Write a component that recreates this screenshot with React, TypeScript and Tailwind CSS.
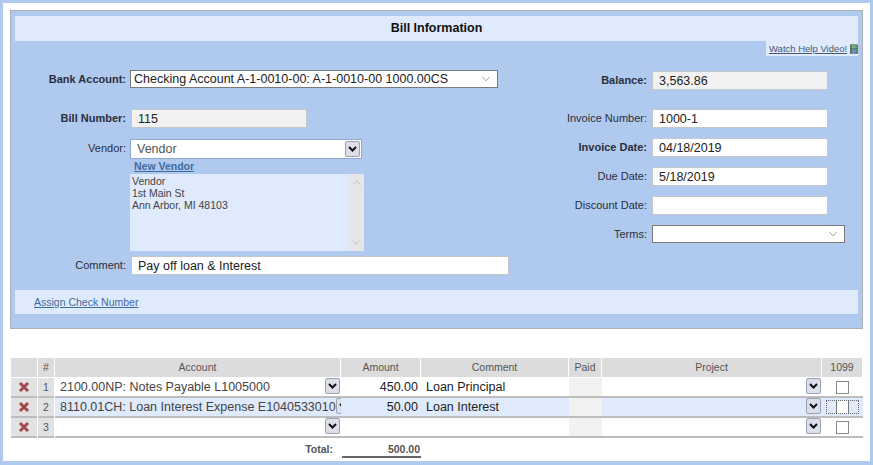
import { ChevronDown, ChevronUp } from "lucide-react";

const font = "font-['Liberation_Sans',Arial,sans-serif]";

const Label = ({ text, width, bold }: { text: string; width: string; bold?: boolean }) => (
  <div className={`${width} shrink-0 text-right text-[11px] leading-[18px] text-[#2b2f3a] ${bold ? "font-bold" : ""}`}>{text}</div>
);

const Field = ({ value, width, muted }: { value?: string; width: string; muted?: boolean }) => (
  <div className={`${width} h-[19px] border border-[#c3c7cc] ${muted ? "bg-[#f2f2f2]" : "bg-white"} pl-[6px] text-[12.5px] leading-[18px] text-[#222]`}>{value}</div>
);

const NativeSelect = ({ value, width, height }: { value?: string; width: string; height: string }) => (
  <div className={`${width} ${height} flex items-center justify-between border border-[#7a7a7a] bg-white pl-[3px] pr-[4px] text-[12.5px] text-[#222]`}>
    <span className="whitespace-nowrap">{value}</span>
    <ChevronDown className="size-[14px] text-[#777]" strokeWidth={1.2} />
  </div>
);

const DropButton = () => (
  <div className="flex h-[16px] w-[15px] shrink-0 items-center justify-center rounded-[2px] border border-[#9aa3b5] bg-[#dcdfe9]">
    <svg width="9" height="6" viewBox="0 0 9 6">
      <path d="M1 1 L4.5 4.5 L8 1" fill="none" stroke="#111" strokeWidth="2" />
    </svg>
  </div>
);

const Check = () => <div className="size-[13px] border border-[#8a8a8a] bg-white" />;

const lines = [
  { n: "1", account: "2100.00NP: Notes Payable L1005000", amount: "450.00", comment: "Loan Principal" },
  { n: "2", account: "8110.01CH: Loan Interest Expense E1040533010", amount: "50.00", comment: "Loan Interest", active: true },
  { n: "3", account: "", amount: "", comment: "" },
];

const headers = ["", "#", "Account", "Amount", "Comment", "Paid", "Project", "1099"];

const FilmIcon = () => (
  <svg width="12" height="14" viewBox="0 0 12 14">
    <rect width="12" height="14" fill="#4a4f45" />
    <rect x="3" y="1" width="6" height="5.5" fill="#62b878" />
    <rect x="3" y="7.5" width="6" height="5.5" fill="#5a9ccf" />
    {[1, 4, 7, 10].map((y) => (
      <g key={y}>
        <rect x="0.8" y={y} width="1.4" height="1.6" fill="#d8d8c8" />
        <rect x="9.8" y={y} width="1.4" height="1.6" fill="#d8d8c8" />
      </g>
    ))}
  </svg>
);

export default function App() {
  return (
    <div className={`${font} h-[465px] w-[873px] overflow-hidden bg-[#b0c9ee] pt-[3px] pl-[3px]`}>
      <div className="h-[458px] w-[867px] bg-white pt-[7px] pl-[7px]">
        {/* Bill panel */}
        <div className="flex h-[319px] w-[853px] flex-col border border-[#a9b0ba] bg-[#b0c9ee] px-[4px] pt-[5px]">
          <div className="h-[25px] shrink-0 bg-[#dfeafd] text-center text-[12.5px] font-bold leading-[25px] text-[#111]">Bill Information</div>
          <div className="flex h-[15px] w-[92px] shrink-0 items-center gap-[3px] self-end bg-[#dfeafd] pl-[3px]">
            <span className="whitespace-nowrap text-[9.5px] leading-[13px] text-[#4a5a6a] underline">Watch Help Video!</span>
            <FilmIcon />
          </div>

          <div className="flex h-[220px] shrink-0">
            {/* Left column */}
            <div className="w-[500px]">
              <div className="mt-[14px] flex gap-[4px]">
                <Label text="Bank Account:" width="w-[111px]" bold />
                <NativeSelect value="Checking Account A-1-0010-00: A-1-0010-00 1000.00CS" width="w-[368px]" height="h-[18px]" />
              </div>
              <div className="mt-[21px] flex gap-[5px]">
                <Label text="Bill Number:" width="w-[111px]" bold />
                <Field value="115" width="w-[176px]" muted />
              </div>
              <div className="mt-[11px] flex gap-[4px]">
                <Label text="Vendor:" width="w-[111px]" />
                <div className="flex h-[20px] w-[232px] items-center justify-between border border-[#8fa9cf] bg-white pl-[6px] pr-[1px] text-[12.5px] text-[#555]">
                  Vendor
                  <DropButton />
                </div>
              </div>
              <div className="h-[15px] pl-[119px] text-[10.5px] font-bold leading-[15px] text-[#3f6c9e] underline">New Vendor</div>
              <div className="ml-[115px] flex h-[77px] w-[234px] justify-between bg-[#dfeafd]">
                <div className="px-[2px] pt-[1px] text-[10.5px] leading-[12px] text-[#444]">
                  <div>Vendor</div>
                  <div>1st Main St</div>
                  <div>Ann Arbor, MI 48103</div>
                </div>
                <div className="flex w-[15px] flex-col items-center justify-between bg-[#e6e6e6] py-[2px] text-[#a5a5a5]">
                  <ChevronUp className="size-[13px]" strokeWidth={1.2} />
                  <ChevronDown className="size-[13px]" strokeWidth={1.2} />
                </div>
              </div>
              <div className="mt-[5px] flex gap-[5px]">
                <Label text="Comment:" width="w-[111px]" />
                <Field value="Pay off loan & Interest" width="w-[378px]" />
              </div>
            </div>

            {/* Right column */}
            <div className="flex-1">
              <div className="mt-[15px] flex gap-[5px]">
                <Label text="Balance:" width="w-[132px]" bold />
                <Field value="3,563.86" width="w-[176px]" muted />
              </div>
              <div className="mt-[19px] flex gap-[5px]">
                <Label text="Invoice Number:" width="w-[132px]" />
                <Field value="1000-1" width="w-[176px]" />
              </div>
              <div className="mt-[10px] flex gap-[5px]">
                <Label text="Invoice Date:" width="w-[132px]" bold />
                <Field value="04/18/2019" width="w-[176px]" />
              </div>
              <div className="mt-[10px] flex gap-[5px]">
                <Label text="Due Date:" width="w-[132px]" />
                <Field value="5/18/2019" width="w-[176px]" />
              </div>
              <div className="mt-[10px] flex gap-[5px]">
                <Label text="Discount Date:" width="w-[132px]" />
                <Field width="w-[176px]" />
              </div>
              <div className="mt-[10px] flex gap-[5px]">
                <Label text="Terms:" width="w-[132px]" />
                <NativeSelect width="w-[193px]" height="h-[18px]" />
              </div>
            </div>
          </div>

          <div className="mt-[14px] h-[24px] shrink-0 bg-[#dfeafd] pl-[19px] text-[10.5px] leading-[24px] text-[#3f6c9e] underline">Assign Check Number</div>
        </div>

        {/* Lines table */}
        <div className="mt-[29px] grid w-[852px] grid-cols-[27px_17px_286px_80px_148px_33px_220px_41px] pl-px">
          {headers.map((h, i) => (
            <div key={i} className="mb-px mr-px h-[19px] bg-[#dcdcdc] text-center text-[10.5px] leading-[19px] text-[#555]">{h}</div>
          ))}
          {lines.map((row) => (
            <div key={row.n} className="contents">
              <div className="mr-px flex h-[20px] items-center justify-center border-b-2 border-[#bdbdbd] bg-[#e2e2e2]">
                <svg width="12" height="12" viewBox="0 0 12 12">
                  <path d="M2 2 L10 10 M10 2 L2 10" stroke="#a3474b" strokeWidth="3" />
                </svg>
              </div>
              <div className="mr-px h-[20px] border-b-2 border-[#bdbdbd] bg-[#e2e2e2] text-center text-[10.5px] leading-[18px] text-[#555]">{row.n}</div>
              <div className={`flex h-[20px] items-start justify-between border-b-2 border-[#bdbdbd] pl-[5px] pr-[1px] text-[12.5px] leading-[18px] text-[#444] ${row.active ? "bg-[#dfeafd]" : "bg-white"}`}>
                <span className="whitespace-nowrap">{row.account}</span>
                <DropButton />
              </div>
              <div className={`h-[20px] border-b-2 border-[#bdbdbd] pr-[3px] text-right text-[12.5px] leading-[18px] text-[#222] ${row.active ? "bg-[#dfeafd]" : "bg-white"}`}>{row.amount}</div>
              <div className={`h-[20px] border-b-2 border-[#bdbdbd] pl-[5px] text-[12.5px] leading-[18px] text-[#222] ${row.active ? "bg-[#dfeafd]" : "bg-white"}`}>{row.comment}</div>
              <div className="h-[20px] border-b-2 border-[#bdbdbd] bg-[#f2f2f2]" />
              <div className={`flex h-[20px] items-start justify-end border-b-2 border-[#bdbdbd] pr-[1px] ${row.active ? "bg-[#dfeafd]" : "bg-white"}`}>
                <DropButton />
              </div>
              <div className={`flex h-[20px] items-center justify-center border-b-2 border-[#bdbdbd] ${row.active ? "bg-[#dfeafd]" : "bg-white"}`}>
                {row.active ? (
                  <div className="flex h-[14px] w-[33px] justify-center border border-dotted border-[#666]">
                    <div className="h-full w-[13px] border-x border-[#777] bg-white" />
                  </div>
                ) : (
                  <Check />
                )}
              </div>
            </div>
          ))}
        </div>

        {/* Total */}
        <div className="mt-[4px] flex w-[411px] items-start justify-end">
          <div className="text-[10.5px] font-bold leading-[14px] text-[#555]">Total:</div>
          <div className="ml-[9px] w-[79px] border-b-2 border-[#666] pr-px text-right text-[10.5px] font-bold leading-[14px] text-[#555]">500.00</div>
        </div>
      </div>
    </div>
  );
}
